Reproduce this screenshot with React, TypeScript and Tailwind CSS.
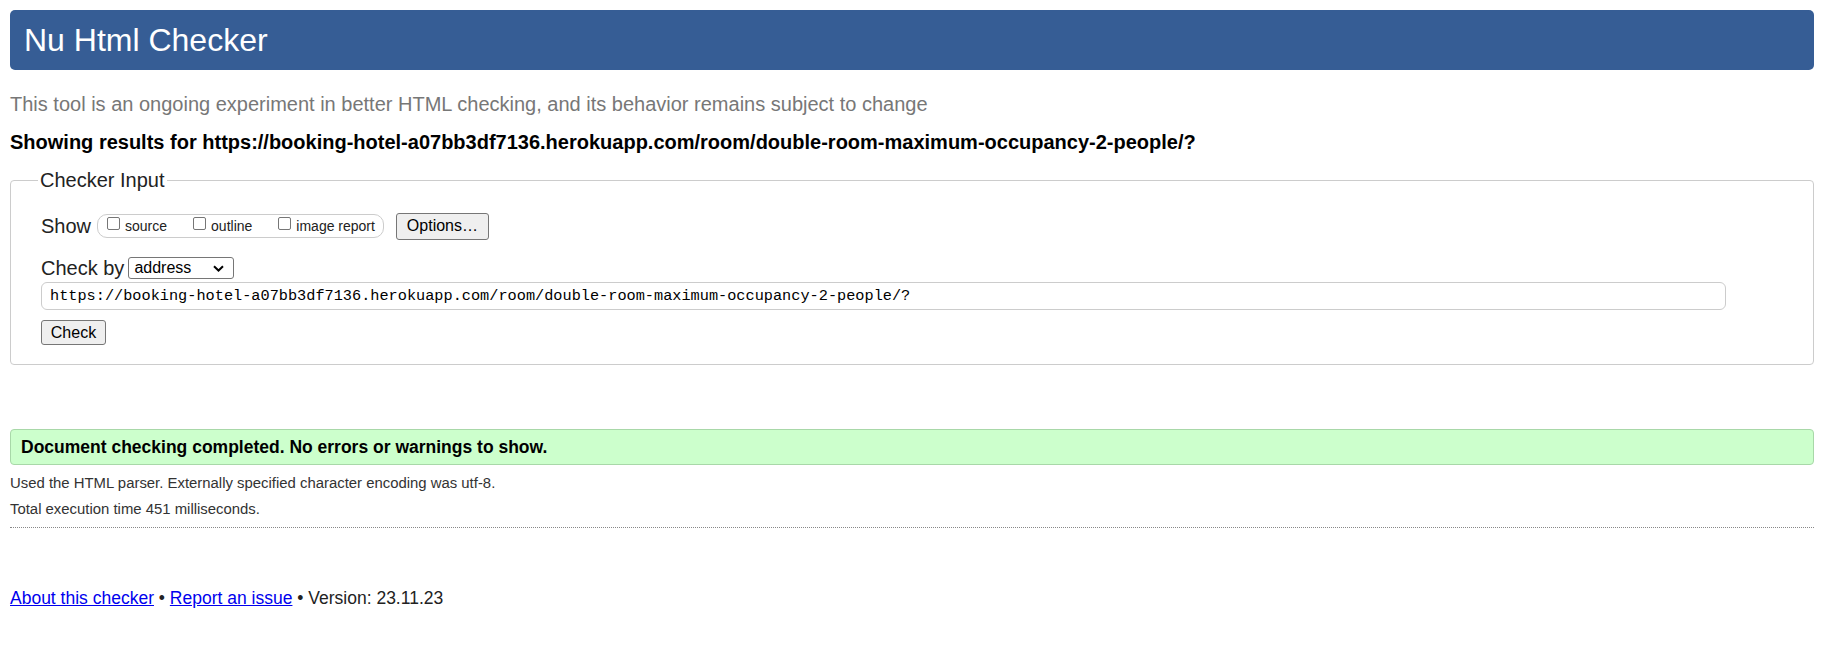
const url =
  "https://booking-hotel-a07bb3df7136.herokuapp.com/room/double-room-maximum-occupancy-2-people/?";

const Box = () => (
  <span className="mb-[6px] inline-block h-[13px] w-[13px] shrink-0 rounded-[2px] border border-[#767676] bg-white" />
);

const App = () => {
  return (
    <div className="min-h-screen bg-white pt-[10px] pl-[10px] pr-[20px] font-['Liberation_Sans',Arial,sans-serif] text-[#222]">
      <div className="flex h-[60px] items-center rounded-[5px] bg-[#365d95] pl-[14px]">
        <h1 className="text-[32px] leading-none text-white">Nu Html Checker</h1>
      </div>

      <p className="mt-[16px] text-[20px] leading-[36px] text-[#777]">
        This tool is an ongoing experiment in better HTML checking, and its behavior remains subject to change
      </p>
      <p className="mt-[8px] text-[20px] font-bold leading-[24px] text-black">Showing results for {url}</p>

      <fieldset className="mt-[16px] rounded-[4px] border border-[#ccc] pb-[19px] pl-[30px]">
        <legend className="-ml-[3px] px-[2px] text-[20px] leading-[21px]">Checker Input</legend>

        <div className="mt-[21px] flex h-[28px] items-center">
          <span className="text-[20px]">Show</span>
          <div className="ml-[6px] flex h-[24px] items-center gap-[26px] rounded-[10px] border border-[#ccc] pl-[9px] pr-[8px] text-[14px]">
            <label className="flex items-center">
              <Box />
              <span className="ml-[5px]">source</span>
            </label>
            <label className="flex items-center">
              <Box />
              <span className="ml-[5px]">outline</span>
            </label>
            <label className="flex items-center">
              <Box />
              <span className="ml-[5px]">image report</span>
            </label>
          </div>
          <button className="ml-[12px] h-[27px] w-[93px] rounded-[3px] border border-[#767676] bg-[#efefef] text-[16px] text-black">
            Options…
          </button>
        </div>

        <div className="mt-[16px] flex h-[24px] items-center">
          <span className="text-[20px]">Check by</span>
          <div className="ml-[4px] flex h-[22px] w-[106px] items-center justify-between rounded-[3px] border border-[#767676] bg-white pl-[5px] pr-[9px] text-[16px] text-black">
            <span>address</span>
            <svg width="11" height="7" viewBox="0 0 11 7" fill="none">
              <path d="M1 1.2 5.5 5.5 10 1.2" stroke="#000" strokeWidth="2" />
            </svg>
          </div>
        </div>

        <input
          readOnly
          value={url}
          className="mt-[2px] block h-[28px] w-[1685px] rounded-[6px] border border-[#ccc] px-[8px] font-['Liberation_Mono',monospace] text-[15.25px] text-black outline-none"
        />

        <button className="mt-[10px] block h-[25px] w-[65px] rounded-[3px] border border-[#767676] bg-[#efefef] text-[16px] text-black">
          Check
        </button>
      </fieldset>

      <div className="mt-[64px] flex h-[36px] items-center rounded-[4px] border border-[#a8d8a8] bg-[#ccffcc] pl-[10px] text-[17.5px] font-bold text-black">
        Document checking completed. No errors or warnings to show.
      </div>

      <p className="mt-[5px] text-[14.9px] leading-[26px] text-[#333]">
        Used the HTML parser. Externally specified character encoding was utf-8.
      </p>
      <p className="text-[14.9px] leading-[26px] text-[#333]">Total execution time 451 milliseconds.</p>
      <div className="mt-[5px] border-t border-dotted border-[#888]" />

      <p className="mt-[57px] text-[17.5px] leading-[26px] text-[#222]">
        <a href="#" className="text-[#0000ee] underline">
          About this checker
        </a>{" "}
        •{" "}
        <a href="#" className="text-[#0000ee] underline">
          Report an issue
        </a>{" "}
        • Version: 23.11.23
      </p>
    </div>
  );
};

export default App;
